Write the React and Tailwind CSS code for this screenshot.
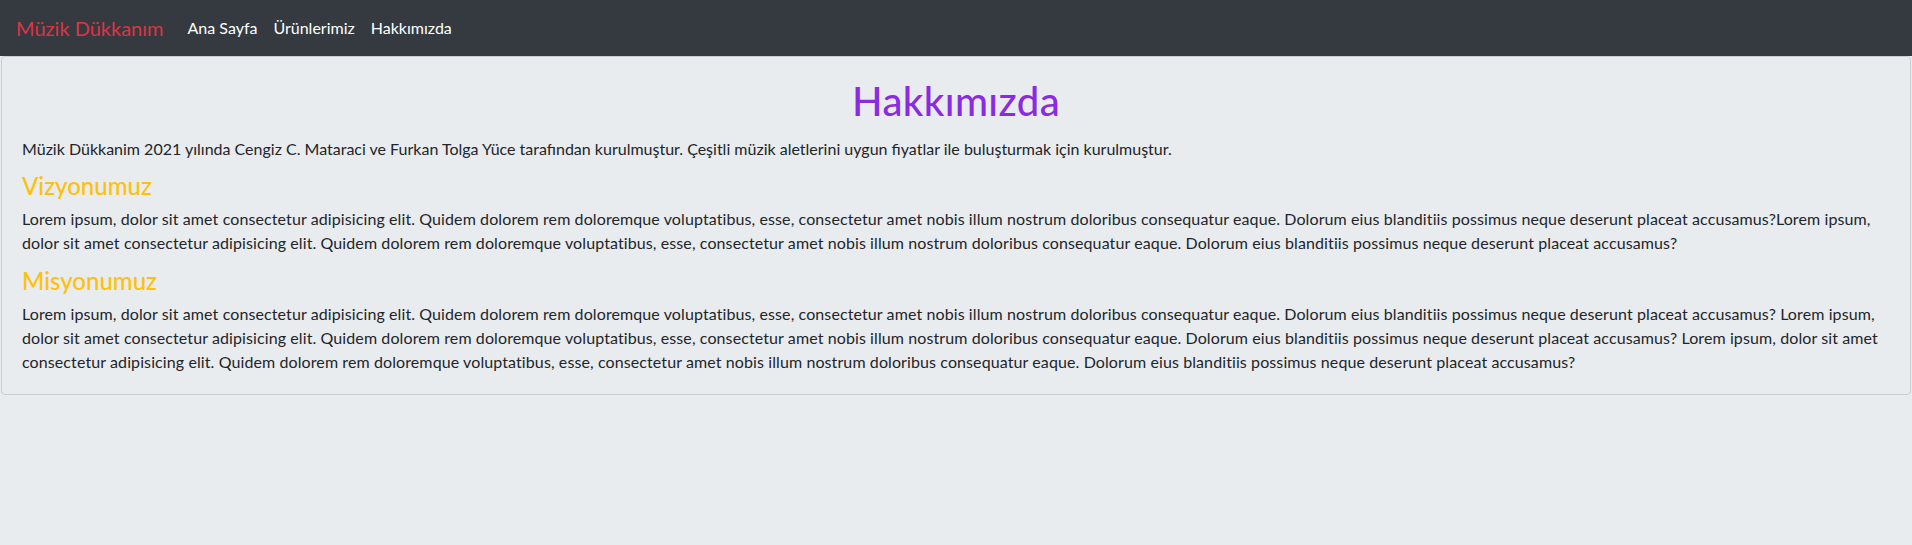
import React from 'react';

const intro =
  'Müzik Dükkanim 2021 yılında Cengiz C. Mataraci ve Furkan Tolga Yüce tarafından kurulmuştur. Çeşitli müzik aletlerini uygun fiyatlar ile buluşturmak için kurulmuştur.';

const lorem =
  'Lorem ipsum, dolor sit amet consectetur adipisicing elit. Quidem dolorem rem doloremque voluptatibus, esse, consectetur amet nobis illum nostrum doloribus consequatur eaque. Dolorum eius blanditiis possimus neque deserunt placeat accusamus?';

const links = ['Ana Sayfa', 'Ürünlerimiz', 'Hakkımızda'];

function Navbar() {
  return (
    <nav className="flex items-center h-14 px-4 bg-[#343a40]">
      <a href="#" className="mr-4 text-xl text-[#dc3545]">
        Müzik Dükkanım
      </a>
      <ul className="flex">
        {links.map((l) => (
          <li key={l}>
            <a href="#" className="px-2 text-white">{l}</a>
          </li>
        ))}
      </ul>
    </nav>
  );
}

export default function App() {
  return (
    <div className="min-h-screen bg-[#e9ecef] text-[#212529] font-['Lato',sans-serif]">
      <Navbar />
      <div className="mx-px border border-black/[0.125] rounded">
        <div className="p-5 text-base leading-6 tracking-[0.1px]">
          <h1 className="mb-3 text-center text-[40px] leading-[48px] tracking-[0.4px] font-medium text-[#8a2be2]">
            Hakkımızda
          </h1>
          <p className="mb-[10px] tracking-normal">{intro}</p>
          <h4 className="mb-[7px] text-2xl leading-[29px] tracking-normal font-medium text-[#ffc107]">
            Vizyonumuz
          </h4>
          <p className="mb-[11px]">{lorem}{lorem}</p>
          <h4 className="mb-[7px] text-2xl leading-[29px] tracking-normal font-medium text-[#ffc107]">
            Misyonumuz
          </h4>
          <p>{lorem} {lorem} {lorem}</p>
        </div>
      </div>
    </div>
  );
}
